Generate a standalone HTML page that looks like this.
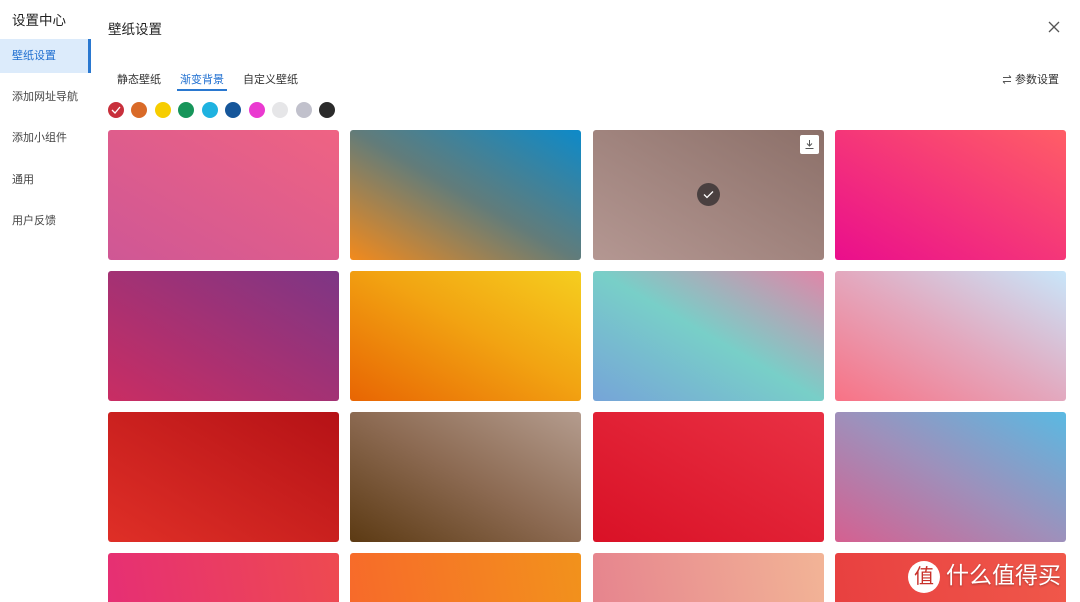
<!DOCTYPE html>
<html><head><meta charset="utf-8"><style>
*{margin:0;padding:0;box-sizing:border-box}
html,body{width:1080px;height:602px;overflow:hidden;background:#fff}
body{font-family:"Liberation Sans","Noto Sans CJK SC",sans-serif;color:#333}
#w{position:relative;width:1080px;height:602px;overflow:hidden}
.side{position:absolute;left:0;top:0;width:91px;height:602px;background:#fff}
.side h1{position:absolute;left:12px;top:9px;font-size:13.5px;font-weight:normal;color:#222}
.item{position:absolute;left:0;width:91px;height:34px;line-height:34px;padding-left:12px;font-size:11px;color:#444}
.item.on{background:#dcebfb;color:#1f6fd0;border-right:3px solid #2a78d0}
.title{position:absolute;left:108px;top:18px;font-size:13.5px;color:#222}
.close{position:absolute;left:1048px;top:21px}
.tabs{position:absolute;left:117px;top:71px;font-size:11px;color:#333}
.tabs span{position:absolute;white-space:nowrap}
.tabs .on{color:#1f6fd0}
.uline{position:absolute;left:177px;top:89px;width:50px;height:2px;background:#2a78d0}
.param{position:absolute;left:1002px;top:71px;font-size:11px;color:#333;white-space:nowrap}
.dot{position:absolute;top:102px;width:16px;height:16px;border-radius:50%}
.card{position:absolute;width:231px;height:130px;border-radius:3px}
.card.last{height:49px;border-radius:3px 3px 0 0}
.wm{position:absolute;left:908px;top:556px;color:#fff;font-size:23px;white-space:nowrap;text-shadow:0 1px 2px rgba(0,0,0,.3)}
.wm b{display:inline-block;width:32px;height:32px;border-radius:50%;background:#fff;color:#c8302a;font-size:20px;line-height:32px;text-align:center;vertical-align:middle;margin-right:6px;font-weight:normal;text-shadow:none}
</style></head><body><div id="w">
<div class="side">
<h1>设置中心</h1>
<div class="item on" style="top:39px">壁纸设置</div>
<div class="item" style="top:80px">添加网址导航</div>
<div class="item" style="top:121px">添加小组件</div>
<div class="item" style="top:163px">通用</div>
<div class="item" style="top:204px">用户反馈</div>
</div>
<div class="title">壁纸设置</div>
<svg class="close" width="12" height="12" viewBox="0 0 12 12"><path d="M1 1L11 11M11 1L1 11" stroke="#555" stroke-width="1.3"/></svg>
<div class="tabs"><span style="left:0">静态壁纸</span><span class="on" style="left:63px">渐变背景</span><span style="left:126px">自定义壁纸</span></div>
<div class="uline"></div>
<div class="param"><svg width="10" height="9" viewBox="0 0 10 9" style="vertical-align:-1px"><path d="M1 2.5H9M7 0.5L9 2.5M9 6.5H1M3 8.5L1 6.5" stroke="#555" fill="none" stroke-width="1"/></svg> 参数设置</div>
<div class="dot" style="left:108px;background:#c8303c"></div>
<svg style="position:absolute;left:111px;top:106px" width="10" height="8" viewBox="0 0 10 8"><path d="M1 4L4 7L9 1" stroke="#fff" fill="none" stroke-width="1.3"/></svg>
<div class="dot" style="left:131px;background:#d96a28"></div>
<div class="dot" style="left:155px;background:#f7cd00"></div>
<div class="dot" style="left:178px;background:#17955a"></div>
<div class="dot" style="left:202px;background:#1fb2e0"></div>
<div class="dot" style="left:225px;background:#16569a"></div>
<div class="dot" style="left:249px;background:#ea3ad0"></div>
<div class="dot" style="left:272px;background:#e6e6e8"></div>
<div class="dot" style="left:296px;background:#c1c1cc"></div>
<div class="dot" style="left:319px;background:#2b2b2b"></div>

<div class="card" style="left:108px;top:130px;background:linear-gradient(30deg,#cf5795,#ef6383)"></div>
<div class="card" style="left:350px;top:130px;background:linear-gradient(30deg,#f38a1c 0%,#627c7a 50%,#0d8ac9 100%)"></div>
<div class="card" style="left:593px;top:130px;background:linear-gradient(30deg,#b49792,#8c7069)"></div>
<div style="position:absolute;left:697px;top:183px;width:23px;height:23px;border-radius:50%;background:#4a4040"></div>
<svg style="position:absolute;left:703px;top:190px" width="11" height="9" viewBox="0 0 11 9"><path d="M1 4.5L4 7.5L10 1.5" stroke="#fff" fill="none" stroke-width="1.3"/></svg>
<div style="position:absolute;left:800px;top:135px;width:19px;height:19px;border-radius:2px;background:#fff"></div>
<svg style="position:absolute;left:804px;top:139px" width="11" height="11" viewBox="0 0 11 11"><path d="M5.5 1V7M3 4.5L5.5 7L8 4.5M1.5 9.5H9.5" stroke="#555" fill="none" stroke-width="1"/></svg>
<div class="card" style="left:835px;top:130px;background:linear-gradient(30deg,#ea0e8c,#ff5e66)"></div>

<div class="card" style="left:108px;top:271px;background:linear-gradient(30deg,#c92d63,#7d3685)"></div>
<div class="card" style="left:350px;top:271px;background:linear-gradient(30deg,#e86503,#f2a412 55%,#f5ce1f)"></div>
<div class="card" style="left:593px;top:271px;background:linear-gradient(30deg,#76a4d8,#78cfc8 50%,#e086a8)"></div>
<div class="card" style="left:835px;top:271px;background:linear-gradient(30deg,#f87285,#e3a8be 50%,#c8e6fa)"></div>

<div class="card" style="left:108px;top:412px;background:linear-gradient(30deg,#df2f27,#b51216)"></div>
<div class="card" style="left:350px;top:412px;background:linear-gradient(30deg,#5c3a13,#8c6a52 50%,#b49c8e)"></div>
<div class="card" style="left:593px;top:412px;background:linear-gradient(30deg,#d91126,#e93144)"></div>
<div class="card" style="left:835px;top:412px;background:linear-gradient(30deg,#d56090,#9e90bb 50%,#5ab9e2)"></div>

<div class="card last" style="left:108px;top:553px;background:linear-gradient(80deg,#e62f74,#ee4a50)"></div>
<div class="card last" style="left:350px;top:553px;background:linear-gradient(80deg,#f76a2a,#f2921c)"></div>
<div class="card last" style="left:593px;top:553px;background:linear-gradient(80deg,#e6848e,#f2b496)"></div>
<div class="card last" style="left:835px;top:553px;background:linear-gradient(80deg,#e84040,#f0584a)"></div>
<div class="wm"><b>值</b>什么值得买</div>
</div></body></html>
